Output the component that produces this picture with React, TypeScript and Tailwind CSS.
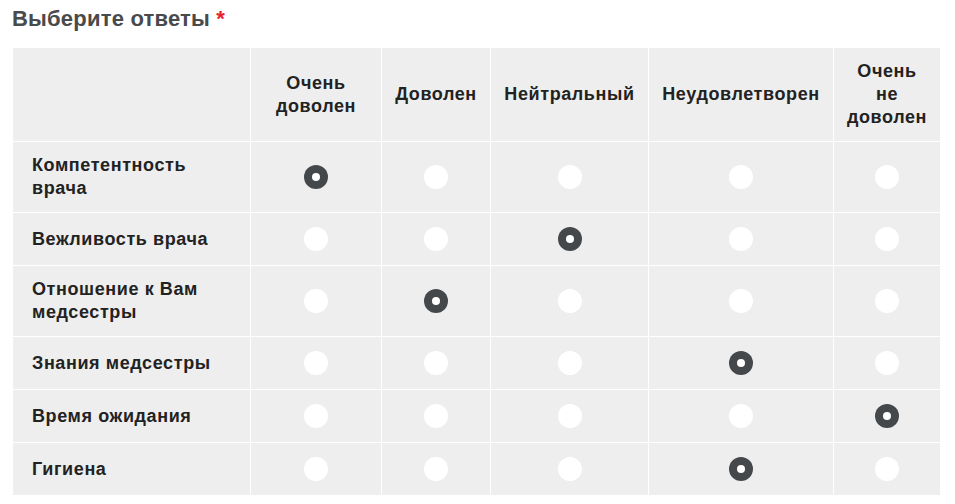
const columns = [
  ['Очень', 'доволен'],
  ['Доволен'],
  ['Нейтральный'],
  ['Неудовлетворен'],
  ['Очень', 'не', 'доволен'],
]

const rows: { label: string[]; value: number }[] = [
  { label: ['Компетентность', 'врача'], value: 0 },
  { label: ['Вежливость врача'], value: 2 },
  { label: ['Отношение к Вам', 'медсестры'], value: 1 },
  { label: ['Знания медсестры'], value: 3 },
  { label: ['Время ожидания'], value: 4 },
  { label: ['Гигиена'], value: 3 },
]

function Radio({ checked }: { checked: boolean }) {
  return checked ? (
    <span className="flex h-6 w-6 items-center justify-center rounded-full bg-[#45484b]">
      <span className="h-2 w-2 rounded-full bg-white" />
    </span>
  ) : (
    <span className="h-6 w-6 rounded-full bg-white" />
  )
}

export default function App() {
  return (
    <div className="min-h-screen bg-white pl-[12px] pt-[6px] font-['Liberation_Sans',Arial,sans-serif]">
      <h2 className="text-[22px] font-bold leading-[26px] tracking-[0.2px] text-[#484a4c]">
        Выберите ответы <span className="text-[#e8202a]">*</span>
      </h2>
      <div className="ml-px mt-[16px] grid w-[927px] grid-cols-[237px_130px_108px_157px_184px_106px] grid-rows-[93px_70px_52px_70px_52px_52px_52px] gap-px bg-white text-[18px] font-bold leading-[23px] tracking-[0.6px] text-[#222]">
        <div className="bg-[#eeeeee]" />
        {columns.map((c, i) => (
          <div key={i} className="flex flex-col items-center justify-center whitespace-nowrap bg-[#eeeeee] text-center">
            {c.map((line) => (
              <span key={line}>{line}</span>
            ))}
          </div>
        ))}
        {rows.map((r) => (
          <>
            <div key={r.label[0]} className="flex flex-col justify-center whitespace-nowrap bg-[#eeeeee] pl-[19px]">
              {r.label.map((line) => (
                <span key={line}>{line}</span>
              ))}
            </div>
            {columns.map((_, i) => (
              <div key={r.label[0] + i} className="flex items-center justify-center bg-[#eeeeee]">
                <Radio checked={r.value === i} />
              </div>
            ))}
          </>
        ))}
      </div>
    </div>
  )
}
